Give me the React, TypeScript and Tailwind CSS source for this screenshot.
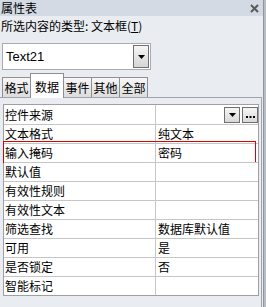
const rows: { label: string; value: string }[] = [
  { label: '控件来源', value: '' },
  { label: '文本格式', value: '纯文本' },
  { label: '输入掩码', value: '密码' },
  { label: '默认值', value: '' },
  { label: '有效性规则', value: '' },
  { label: '有效性文本', value: '' },
  { label: '筛选查找', value: '数据库默认值' },
  { label: '可用', value: '是' },
  { label: '是否锁定', value: '否' },
  { label: '智能标记', value: '' },
];

const tabs = ['格式', '数据', '事件', '其他', '全部'];

function DownArrow() {
  return (
    <svg width="7" height="4" viewBox="0 0 7 4">
      <path d="M0 0H7L3.5 4Z" fill="#000" />
    </svg>
  );
}

export default function App() {
  return (
    <div className="w-[266px] h-[307px] flex overflow-hidden bg-[#e9ecf1] text-[12px] text-black [font-family:'Noto_Sans_CJK_SC',sans-serif]">
      <div className="flex-1 flex flex-col">
        {/* title bar */}
        <div className="h-[16px] bg-[#d3dae3] flex items-center justify-between pl-[1px] pr-[4px]">
          <span className="leading-none">属性表</span>
          <svg width="9" height="9" viewBox="0 0 9 9">
            <path d="M1 1L8 8M8 1L1 8" stroke="#5a5a5a" strokeWidth="2" />
          </svg>
        </div>

        <div className="h-[20px] pl-[1px] flex items-center leading-none">
          所选内容的类型: 文本框(<span className="underline">T</span>)
        </div>

        {/* combo */}
        <div className="mt-[7px] ml-[2px] w-[149px] h-[27px] border border-[#a7abb0] bg-white flex p-px">
          <div className="flex-1 flex items-center pl-[2px] text-[13px] [font-family:'Liberation_Sans',sans-serif]">
            Text21
          </div>
          <div className="w-[16px] border border-[#707070] bg-gradient-to-b from-[#f6f6f6] to-[#d6d6d6] flex items-center justify-center">
            <DownArrow />
          </div>
        </div>

        {/* tabs */}
        <div className="mt-[3px] h-[24px] flex items-end pl-[2px]">
          {tabs.map((t) =>
            t === '数据' ? (
              <div
                key={t}
                className="relative z-10 -mb-px -ml-px h-[25px] w-[34px] pt-[2px] bg-white border-t border-l border-r border-[#8e8f8f] flex items-center justify-center leading-none"
              >
                {t}
              </div>
            ) : (
              <div
                key={t}
                className="-ml-px first:ml-0 h-[20px] w-[29px] bg-gradient-to-b from-[#f7f7f7] to-[#dcdcdc] border-t border-l border-r border-[#8e8f8f] flex items-center justify-center leading-none"
              >
                {t}
              </div>
            )
          )}
        </div>

        {/* pane */}
        <div className="flex-1 border-t border-r border-[#a0a4a8] pt-[6px] pl-[3px] pr-[2px] mr-[1px]">
          <div className="border border-[#a0a0a0] bg-white">
            {rows.map((r, i) => (
              <div
                key={r.label}
                className={
                  'relative flex h-[19px] leading-none ' + (i > 0 ? 'border-t border-[#c6c6c6]' : 'h-[18px]')
                }
              >
                <div className="w-[152px] border-r border-[#c6c6c6] pl-[1px] flex items-center">{r.label}</div>
                <div className="flex-1 pl-[2px] flex items-center">
                  {r.value}
                  {i === 0 && (
                    <div className="ml-auto flex gap-[2px]">
                      <div className="w-[16px] h-[16px] border border-[#6f6f6f] bg-gradient-to-b from-[#f6f6f6] to-[#d8d8d8] flex items-center justify-center">
                        <DownArrow />
                      </div>
                      <div className="w-[16px] h-[16px] border border-[#6f6f6f] bg-gradient-to-b from-[#f6f6f6] to-[#d8d8d8] flex items-end justify-center pb-[4px]">
                        <svg width="9" height="2" viewBox="0 0 9 2">
                          <rect x="0" y="0" width="2" height="2" fill="#000" />
                          <rect x="3.5" y="0" width="2" height="2" fill="#000" />
                          <rect x="7" y="0" width="2" height="2" fill="#000" />
                        </svg>
                      </div>
                    </div>
                  )}
                </div>
                {i === 2 && (
                  <div className="absolute -top-[3px] -left-px right-[2px] -bottom-px border border-[#e00000]" />
                )}
              </div>
            ))}
          </div>
        </div>
      </div>
      <div className="w-[3px] bg-[#b8bdc4] border-l border-[#8f959d]" />
    </div>
  );
}
